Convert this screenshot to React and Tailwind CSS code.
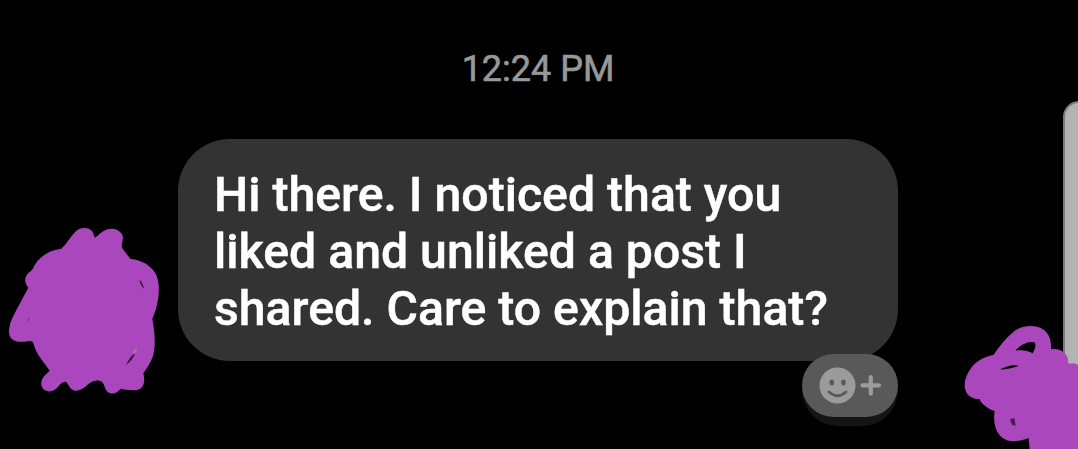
function Timestamp({ children }) {
  return (
    <time className="mt-12 h-[42px] pr-[2px] text-center text-[36px] leading-[42px] text-[#989898] [-webkit-text-stroke:0.6px_#989898]">
      {children}
    </time>
  );
}

function ReactButton() {
  return (
    <button
      aria-label="Add reaction"
      className="absolute right-0 -bottom-[65px] rounded-full bg-[#151515] pb-[9px]"
    >
      <span className="flex h-[63px] w-[96px] items-center justify-center rounded-full bg-[#595959]">
        <svg className="h-[63px] w-[96px]" viewBox="0 0 96 63">
          <circle cx="35.5" cy="31.5" r="18" fill="#9b9b9b" />
          <ellipse cx="29.8" cy="28.5" rx="2.3" ry="2.9" fill="#595959" />
          <ellipse cx="41.5" cy="28.5" rx="2.3" ry="2.9" fill="#595959" />
          <path
            d="M27 38 Q35.5 45.5 44 38"
            fill="none"
            stroke="#595959"
            strokeWidth="2.8"
            strokeLinecap="round"
          />
          <path
            d="M60.5 31.3 H77 M68.8 23 V39.7"
            fill="none"
            stroke="#9b9b9b"
            strokeWidth="4.2"
            strokeLinecap="round"
          />
        </svg>
      </span>
    </button>
  );
}

function Message({ children }) {
  return (
    <div className="relative mt-[49px] ml-[178px] h-[222px] w-[720px] rounded-[52px] bg-[#333333] pt-[27px] pl-[36px]">
      <p className="text-[48.2px] leading-[57px] font-medium whitespace-pre-line text-white [-webkit-text-stroke:0.5px_white]">
        {children}
      </p>
      <ReactButton />
    </div>
  );
}

// scribble over the sender's avatar
function AvatarScribble() {
  return (
    <svg
      className="absolute top-[215px] left-0 h-[190px] w-[180px]"
      viewBox="0 0 540 570"
    >
      <path
        fill="#ab47bc"
        d="M184 101 C202 86 214 60 231 46 C245 36 266 37 276 48 C282 55 280 62 285 68 C296 60 304 50 318 44 C340 37 362 45 368 63 C371 76 363 87 366 98 C374 110 382 120 392 132 C427 135 456 154 469 180 C482 211 476 252 468 281 L457 312 C464 348 468 390 459 423 C452 444 438 462 430 475 C435 492 434 511 421 521 C405 530 378 523 361 521 C353 535 333 540 322 530 C314 522 315 511 306 501 C295 492 278 497 268 505 C253 519 239 529 224 527 C210 524 207 509 198 501 C189 498 183 506 176 513 C165 529 145 535 131 523 C119 512 123 493 133 483 L149 467 C137 450 119 428 109 409 C103 397 103 389 98 381 C90 374 78 382 65 380 C43 382 27 370 27 350 C27 325 38 307 48 287 L85 218 C76 207 72 195 79 182 C83 173 93 170 98 162 C110 133 140 106 184 101 Z"
      />
      <path fill="#2d0f35" d="M418 194 Q428 202 432 221 Q423 213 418 194 Z" />
      <path fill="#71307d" d="M89 304 Q89 315 81 324 Q82 313 89 304 Z" />
      <path fill="#35103d" d="M378 450 Q386 430 406 413 Q399 434 378 450 Z" />
      <path fill="#a177a4" d="M399 414 Q402 403 412 397 Q411 409 404 417 Z" />
    </svg>
  );
}

function CornerScribble() {
  return (
    <svg
      className="absolute top-[310px] right-0 h-[139px] w-[128px]"
      viewBox="0 0 384 417"
    >
      <path
        fill="#ab47bc"
        fillRule="evenodd"
        d="M131 134 C151 106 176 73 205 56 C228 44 263 45 282 60 C301 75 304 96 303 118 C323 114 345 123 353 143 L356 163 C365 158 375 160 384 164 V417 H239 L236 384 C224 388 216 392 199 393 C169 397 148 381 139 359 C132 341 131 321 134 303 C116 297 97 286 88 267 C67 267 49 256 45 236 C40 211 55 181 73 163 C91 145 110 140 131 134 Z M196 122 C220 119 234 123 248 130 C255 118 260 104 253 97 C237 92 212 103 196 122 Z M151 179 C168 179 187 174 204 169 C199 161 164 169 151 179 Z"
      />
      <path fill="#4a1c52" d="M180 328 L186 345 L197 347 L193 324 Z" />
    </svg>
  );
}

function App() {
  return (
    <main className="relative flex h-[449px] w-[1078px] flex-col overflow-hidden bg-black font-[Roboto,sans-serif]">
      <Timestamp>12:24 PM</Timestamp>
      <Message>
        {"Hi there. I noticed that you\nliked and unliked a post I\nshared. Care to explain that?"}
      </Message>

      {/* scroll handle at the screen edge */}
      <div className="absolute top-[101px] -right-[17px] h-[280px] w-[32px] rounded-[16px] border-2 border-[#7a7a7a] bg-[#b3b3b3]" />

      <AvatarScribble />
      <CornerScribble />
    </main>
  );
}

export default App;
